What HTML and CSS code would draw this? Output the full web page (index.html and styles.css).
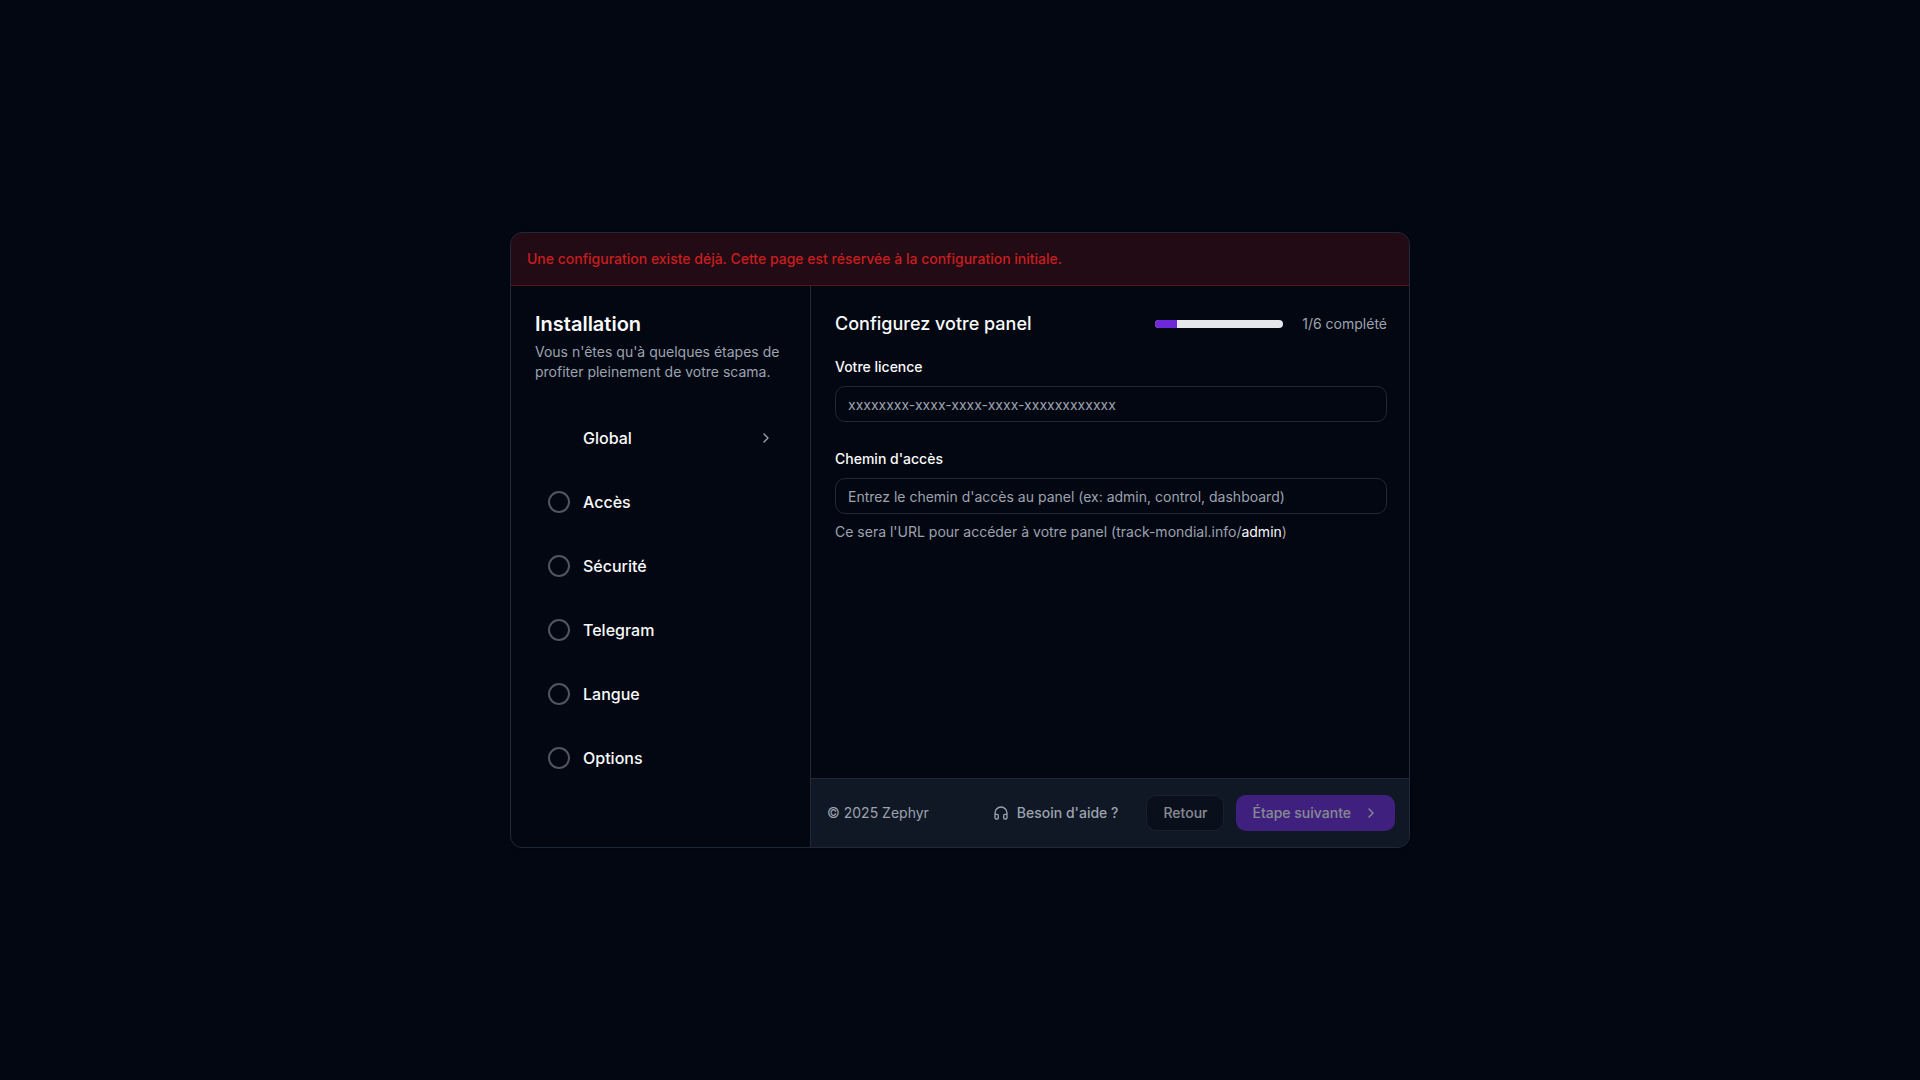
FILE: index.html
```html
<!DOCTYPE html>
<html lang="fr">
<head>
  <meta charset="UTF-8" />
  <meta name="viewport" content="width=device-width, initial-scale=1.0" />
  <title>Installation</title>
  <link rel="stylesheet" href="styles.css">
</head>
<body>
  <div class="card">
    <div class="alert" role="alert">Une configuration existe déjà. Cette page est réservée à la configuration initiale.</div>

    <div class="columns">
      <aside class="sidebar">
        <h1>Installation</h1>
        <p class="intro">Vous n'êtes qu'à quelques étapes de profiter pleinement de votre scama.</p>

        <ol class="steps">
          <li>
            <span class="step-icon"></span>
            <span class="step-name">Global</span>
            <svg class="icon chevron" viewBox="0 0 24 24"><path d="m9 18 6-6-6-6" /></svg>
          </li>
          <li>
            <svg class="step-icon circle" viewBox="0 0 24 24"><circle cx="12" cy="12" r="10" /></svg>
            <span class="step-name">Accès</span>
          </li>
          <li>
            <svg class="step-icon circle" viewBox="0 0 24 24"><circle cx="12" cy="12" r="10" /></svg>
            <span class="step-name">Sécurité</span>
          </li>
          <li>
            <svg class="step-icon circle" viewBox="0 0 24 24"><circle cx="12" cy="12" r="10" /></svg>
            <span class="step-name">Telegram</span>
          </li>
          <li>
            <svg class="step-icon circle" viewBox="0 0 24 24"><circle cx="12" cy="12" r="10" /></svg>
            <span class="step-name">Langue</span>
          </li>
          <li>
            <svg class="step-icon circle" viewBox="0 0 24 24"><circle cx="12" cy="12" r="10" /></svg>
            <span class="step-name">Options</span>
          </li>
        </ol>
      </aside>

      <main class="main">
        <form id="setup" class="content">
          <div class="header">
            <h2>Configurez votre panel</h2>
            <div class="progress">
              <div class="bar"><div class="fill" style="width: 16.67%"></div></div>
              <span>1/6 complété</span>
            </div>
          </div>

          <div class="field">
            <label for="licence">Votre licence</label>
            <input id="licence" type="text" placeholder="xxxxxxxx-xxxx-xxxx-xxxx-xxxxxxxxxxxx">
          </div>

          <div class="field">
            <label for="path">Chemin d'accès</label>
            <input id="path" type="text" placeholder="Entrez le chemin d'accès au panel (ex: admin, control, dashboard)">
            <p class="help">Ce sera l'URL pour accéder à votre panel (track-mondial.info/<span>admin</span>)</p>
          </div>
        </form>

        <footer class="footer">
          <p>© 2025 Zephyr</p>
          <div class="actions">
            <a class="btn ghost" href="#">
              <svg class="icon" viewBox="0 0 24 24"><path d="M3 14h3a2 2 0 0 1 2 2v3a2 2 0 0 1-2 2H5a2 2 0 0 1-2-2v-7a9 9 0 0 1 18 0v7a2 2 0 0 1-2 2h-1a2 2 0 0 1-2-2v-3a2 2 0 0 1 2-2h3" /></svg>
              Besoin d'aide ?
            </a>
            <button class="btn outline" type="button" disabled>Retour</button>
            <button class="btn primary" type="submit" form="setup" disabled>
              Étape suivante
              <svg class="icon" viewBox="0 0 24 24"><path d="m9 18 6-6-6-6" /></svg>
            </button>
          </div>
        </footer>
      </main>
    </div>
  </div>
</body>
</html>
```
FILE: styles.css
```css
* {
  box-sizing: border-box;
  margin: 0;
  padding: 0;
}
body {
  display: flex;
  justify-content: center;
  align-items: center;
  min-height: 100vh;
  background: #030712;
  color: #f9fafb;
  font-family: Inter, sans-serif;
  font-size: 14px;
  line-height: 20px;
}
.card {
  display: flex;
  flex-direction: column;
  width: 100%;
  max-width: 900px;
  min-height: 616px;
  background: #030712;
  border: 1px solid #1f2937;
  border-radius: 12px;
  overflow: hidden;
  box-shadow: 0 1px 3px rgba(0,0,0,0.1);
}
.alert {
  padding: 16px;
  background: rgba(220,38,38,0.15);
  border-bottom: 1px solid rgba(220,38,38,0.3);
  color: #c81e1e;
  font-weight: 500;
}
.columns {
  display: flex;
  flex: 1;
}
.sidebar {
  width: 300px;
  padding: 24px;
  border-right: 1px solid #1f2937;
}
h1 {
  font-size: 20px;
  font-weight: 600;
  line-height: 28px;
}
.intro {
  margin-top: 4px;
  color: #9ca3af;
}
.steps {
  margin-top: 24px;
  list-style: none;
}
.steps li {
  display: flex;
  align-items: center;
  gap: 12px;
  height: 64px;
  padding: 0 12px;
  font-size: 16px;
  font-weight: 500;
  line-height: 24px;
}
.step-icon {
  width: 24px;
  height: 24px;
}
.step-name {
  flex: 1;
}
svg {
  fill: none;
  stroke: currentColor;
  stroke-width: 2;
  stroke-linecap: round;
  stroke-linejoin: round;
}
.icon {
  width: 16px;
  height: 16px;
}
.circle {
  color: rgba(156,163,175,0.5);
}
.chevron {
  color: #9ca3af;
}
.main {
  display: flex;
  flex: 1;
  flex-direction: column;
}
.content {
  display: flex;
  flex: 1;
  flex-direction: column;
  padding: 24px 22px 24px 24px;
}
.header {
  display: flex;
  justify-content: space-between;
  align-items: center;
  margin-bottom: 18px;
}
h2 {
  font-size: 18px;
  font-weight: 500;
  line-height: 28px;
}
.progress {
  display: flex;
  align-items: center;
  gap: 19px;
  color: #9ca3af;
}
.bar {
  width: 128px;
  height: 8px;
  background: #e5e7eb;
  border-radius: 4px;
  overflow: hidden;
}
.fill {
  height: 100%;
  background: #6d28d9;
}
.field {
  display: flex;
  flex-direction: column;
  gap: 8px;
  margin-bottom: 26px;
}
label {
  font-weight: 500;
  line-height: 22px;
}
input {
  width: 100%;
  height: 36px;
  padding: 0 12px;
  background: transparent;
  border: 1px solid #1f2937;
  border-radius: 10px;
  color: inherit;
  font: inherit;
}
input::placeholder {
  color: #9ca3af;
}
.help {
  color: #9ca3af;
}
.help span {
  color: #f9fafb;
}
.footer {
  display: flex;
  justify-content: space-between;
  align-items: center;
  padding: 16px 14px 16px 16px;
  background: rgba(31,41,55,0.5);
  border-top: 1px solid #1f2937;
  color: #9ca3af;
}
.actions {
  display: flex;
  gap: 12px;
}
.btn {
  display: flex;
  align-items: center;
  gap: 8px;
  height: 36px;
  padding: 0 16px;
  border: none;
  border-radius: 10px;
  font: inherit;
  font-weight: 500;
  text-decoration: none;
}
.btn:disabled {
  opacity: 0.5;
}
.ghost {
  color: #9ca3af;
}
.outline {
  background: #030712;
  border: 1px solid #1f2937;
  color: #f9fafb;
}
.primary {
  gap: 12px;
  background: #6d28d9;
  color: #f9fafb;
}
```
